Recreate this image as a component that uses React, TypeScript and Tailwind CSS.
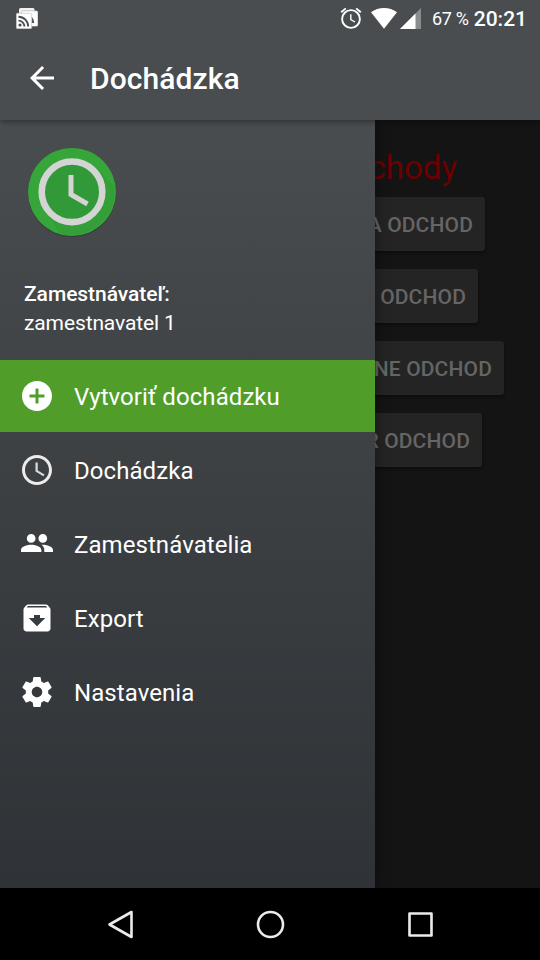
import type { ReactNode } from "react";

type MenuItem = {
  label: string;
  active?: boolean;
  icon: ReactNode;
};

const menu: MenuItem[] = [
  {
    label: "Vytvoriť dochádzku",
    active: true,
    icon: (
      <path d="M12 2C6.48 2 2 6.48 2 12s4.48 10 10 10 10-4.48 10-10S17.52 2 12 2zm5 11h-4v4h-2v-4H7v-2h4V7h2v4h4v2z" />
    ),
  },
  {
    label: "Dochádzka",
    icon: (
      <g fillOpacity="0.9">
        <path d="M11.99 2C6.47 2 2 6.48 2 12s4.47 10 9.99 10C17.52 22 22 17.52 22 12S17.52 2 11.99 2zM12 20c-4.42 0-8-3.58-8-8s3.58-8 8-8 8 3.58 8 8-3.58 8-8 8z" />
        <path fillOpacity="0.8" d="M12.5 7H11v6l5.25 3.15.75-1.23-4.5-2.67z" />
      </g>
    ),
  },
  {
    label: "Zamestnávatelia",
    icon: (
      <path
        transform="translate(0.36 0.5) scale(0.97 0.97)"
        d="M16 11c1.66 0 2.99-1.34 2.99-3S17.66 5 16 5s-3 1.34-3 3 1.34 3 3 3zm-8 0c1.66 0 2.99-1.34 2.99-3S9.66 5 8 5 5 6.34 5 8s1.34 3 3 3zm0 1.400c-2.330 0-7 1.170-7 3.500v1.500h14v-1.500c0-2.330-4.670-3.500-7-3.500zm8 0c-.29 0-.62.02-.97.05 1.160.84 1.970 1.970 1.970 3.450v1.500h6v-1.500c0-2.330-4.670-3.500-7-3.500z"
      />
    ),
  },
  {
    label: "Export",
    icon: (
      <path d="M20.54 5.23l-1.39-1.68C18.88 3.21 18.47 3 18 3H6c-.47 0-.88.21-1.16.55L3.46 5.23C3.17 5.57 3 6.02 3 6.5V19c0 1.1.9 2 2 2h14c1.1 0 2-.9 2-2V6.5c0-.48-.17-.93-.46-1.27zM12 17.500L6.500 12H10v-2h4v2h3.500L12 17.500zM5.120 5l.81-1h12l.94 1H5.120z" />
    ),
  },
  {
    label: "Nastavenia",
    icon: (
      <path d="M19.430 12.980c.04-.32.07-.64.07-.98s-.03-.66-.07-.98l2.110-1.650c.19-.15.24-.42.12-.64l-2-3.460c-.12-.22-.39-.3-.61-.22l-2.490 1c-.52-.4-1.080-.73-1.690-.98l-.38-2.650C14.460 2.180 14.250 2 14 2h-4c-.25 0-.46.18-.49.42l-.38 2.650c-.61.25-1.170.59-1.690.98l-2.490-1c-.23-.09-.49 0-.61.22l-2 3.460c-.13.22-.07.49.12.64l2.110 1.650c-.04.32-.07.65-.07.98s.03.66.07.98l-2.110 1.650c-.19.15-.24.42-.12.64l2 3.460c.12.22.39.3.61.22l2.490-1c.52.4 1.080.73 1.690.98l.38 2.650c.03.24.24.42.49.42h4c.25 0 .46-.18.49-.42l.38-2.650c.61-.25 1.170-.59 1.690-.98l2.490 1c.23.09.49 0 .61-.22l2-3.460c.12-.22.07-.49-.12-.64l-2.110-1.650zM12 15.500c-1.930 0-3.500-1.570-3.500-3.500s1.570-3.500 3.500-3.500 3.500 1.570 3.500 3.500-1.570 3.500-3.500 3.500z" />
    ),
  },
];

const departures = [
  { label: "A ODCHOD", className: "mr-[55px] w-[130px]" },
  { label: "ODCHOD", className: "mr-[62px] w-[130px]" },
  { label: "NE ODCHOD", className: "mr-9 w-[150px]" },
  { label: "R ODCHOD", className: "mr-[58px] w-[130px]" },
];

function StatusBar() {
  return (
    <div className="flex h-9 items-center pl-4 pr-[13px] text-white">
      <svg width="22" height="21" viewBox="0 0 22 21" className="mt-px">
        <rect x="3" y="0" width="15.500" height="15" rx="1.500" fill="#f0f0f0" />
        <rect x="5.500" y="2.600" width="16.500" height="15.800" rx="1.500" fill="#b5b7b8" />
        <rect x="5.900" y="3.200" width="15.600" height="14.700" rx="1.200" fill="#fff" />
        <path d="M15.500 8.500c1.500 1.700 2.400 3.700 2.700 6.500h-2.700z" fill="#494d4f" />
        <rect x="0.300" y="5.300" width="15.400" height="15.400" rx="1.200" fill="#fff" stroke="#b5b7b8" strokeWidth="0.6" />
        <g fill="none" stroke="#494d4f" strokeWidth="1.900">
          <path d="M2.500 8.800a9.700 9.700 0 0 1 9.700 9.700" />
          <path d="M2.500 12.600a5.900 5.900 0 0 1 5.900 5.900" />
        </g>
        <circle cx="4" cy="17" r="1.600" fill="#494d4f" />
      </svg>

      <div className="ml-auto flex items-center">
        <svg width="22" height="22" viewBox="0 0 22 22" fill="none" stroke="#fff">
          <circle cx="11" cy="12" r="8.900" strokeWidth="1.900" />
          <path d="M10.800 7.200v5.300l4.200 2.500" strokeWidth="1.400" />
          <path d="M1.200 5.300l4.600-3.900M20.800 5.300l-4.600-3.900" strokeWidth="1.900" />
        </svg>
        <svg width="26" height="21" viewBox="0 0 26 21" fill="#fff" className="ml-[9px]">
          <path d="M0 4.300C3.800 1.400 8.200 0 13 0s9.200 1.400 13 4.300L13 20.700z" />
        </svg>
        <svg width="21" height="21" viewBox="0 0 21 21" className="ml-[3px]">
          <path d="M21 0v21H0z" fill="#8a8d8e" />
          <path d="M15.500 5.500V21H0z" fill="#fff" />
        </svg>
        <span className="ml-[11px] mt-0.5 whitespace-nowrap text-[18px] leading-none tracking-[-0.3px]">67 %</span>
        <span className="ml-[5px] mt-0.5 text-[21px] font-medium leading-none">20:21</span>
      </div>
    </div>
  );
}

function AppBar() {
  return (
    <header className="relative z-10 h-[120px] shrink-0 bg-[#494d4f] shadow-[0_2px_6px_rgba(0,0,0,0.35)]">
      <StatusBar />
      <div className="flex h-[84px] items-center pl-6">
        <svg width="36" height="36" viewBox="0 0 24 24" fill="#fff">
          <path d="M20 11H7.830l5.590-5.590L12 4l-8 8 8 8 1.410-1.410L7.830 13H20v-2z" />
        </svg>
        <h1 className="ml-[30px] mt-0.5 text-[30px] font-medium leading-none tracking-[0.1px] text-white">
          Dochádzka
        </h1>
      </div>
    </header>
  );
}

function Logo() {
  return (
    <svg width="96" height="96" viewBox="0 0 96 96" className="overflow-visible">
      <circle cx="48" cy="49.200" r="44" fill="#292c2e" fillOpacity="0.5" />
      <circle cx="48" cy="48" r="44" fill="#36a53a" />
      <path d="M71.500 24L90 42a44 44 0 0 1-53 48.500L24.500 71.500z" fill="#349f38" />
      <circle cx="48" cy="47.800" r="30.300" fill="#319937" stroke="#d4d4d4" strokeWidth="6.600" />
      <path d="M47 31v19.500l16.500 9.500" fill="none" stroke="#d4d4d4" strokeWidth="5" />
    </svg>
  );
}

function Drawer() {
  return (
    <aside className="z-[5] w-[375px] shrink-0 bg-linear-to-b from-[#494d4f] to-[#2f3236] text-white shadow-[2px_0_12px_rgba(0,0,0,0.3)]">
      <div className="flex h-60 flex-col px-6 pt-6">
        <Logo />
        <p className="mt-10 text-[21px] font-medium leading-7 tracking-[-0.05px]">Zamestnávateľ:</p>
        <p className="text-[21px] leading-[30px] tracking-[-0.12px]">zamestnavatel 1</p>
      </div>
      <nav className="flex flex-col gap-0.5">
        {menu.map((item) => (
          <a
            key={item.label}
            className={
              item.active
                ? "flex h-[72px] items-center bg-[#509e29] pl-[19px]"
                : "flex h-[72px] items-center pl-[19px]"
            }
          >
            <svg width="36" height="36" viewBox="0 0 24 24" fill="#fff">
              {item.icon}
            </svg>
            <span className="ml-[19px] mt-0.5 text-2xl leading-none tracking-[0.07px]">{item.label}</span>
          </a>
        ))}
      </nav>
    </aside>
  );
}

function Departures() {
  return (
    <main className="flex min-w-0 flex-1 flex-col items-end overflow-hidden bg-[#141414] pt-[27px]">
      <h2 className="mr-[83px] flex h-[50px] w-[82px] items-start justify-end text-[33px] leading-[42px] text-[#6b0000]">
        chody
      </h2>
      <div className="flex flex-col items-end gap-[18px]">
        {departures.map((button) => (
          <button
            key={button.label}
            className={`${button.className} flex h-[54px] items-center justify-end whitespace-nowrap rounded-[3px] bg-[#242424] pr-3 pt-0.5 text-[21px] font-medium leading-[30px] tracking-[0.15px] text-[#656565] shadow-[0_2px_3px_rgba(0,0,0,0.4)]`}
          >
            {button.label}
          </button>
        ))}
      </div>
    </main>
  );
}

function NavigationBar() {
  return (
    <footer className="flex h-[72px] shrink-0 items-center justify-center gap-[114px] bg-black">
      <svg width="36" height="36" viewBox="0 0 36 36" fill="none" stroke="#ebebeb" strokeWidth="2.600" strokeLinejoin="round">
        <path d="M29.500 6v25L7.500 18.500z" />
      </svg>
      <svg width="36" height="36" viewBox="0 0 36 36" fill="none" stroke="#ebebeb" strokeWidth="2.600">
        <circle cx="18.500" cy="18.500" r="12.500" />
      </svg>
      <svg width="36" height="36" viewBox="0 0 36 36" fill="none" stroke="#ebebeb" strokeWidth="2.600" strokeLinejoin="round">
        <rect x="7.500" y="7.500" width="22" height="22" />
      </svg>
    </footer>
  );
}

export default function App() {
  return (
    <div className="flex h-[960px] w-[540px] flex-col overflow-hidden bg-black font-[Roboto,sans-serif]">
      <AppBar />
      <div className="flex min-h-0 flex-1">
        <Drawer />
        <Departures />
      </div>
      <NavigationBar />
    </div>
  );
}
